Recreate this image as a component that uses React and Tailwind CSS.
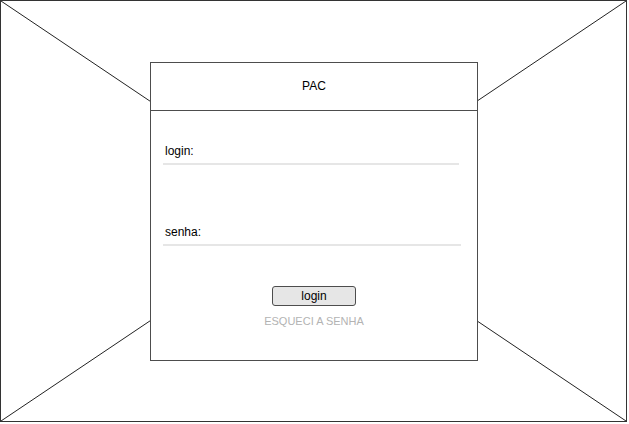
import React from 'react';

const font = { fontFamily: '"Liberation Sans", Arial, sans-serif' };

const Field = ({ label, className = '' }) => (
  <div className={className}>
    <div className="pl-[2px] text-[12px] leading-[14px] text-black">{label}</div>
    <div className="mt-[5px] h-[2px] bg-[#e6e6e6]" />
  </div>
);

export default function App() {
  return (
    <div className="w-[629px] h-[424px] bg-white" style={font}>
      <div className="relative w-[627px] h-[422px] border border-[#333]">
        {/* placeholder X */}
        <svg className="absolute inset-0" width="625" height="420" viewBox="0 0 625 420">
          <line x1="0" y1="0" x2="625" y2="420" stroke="#222" strokeWidth="1" />
          <line x1="625" y1="0" x2="0" y2="420" stroke="#222" strokeWidth="1" />
        </svg>

        <div className="relative ml-[149px] mt-[61px] w-[328px] h-[299px] bg-white border border-[#4d4d4d] flex flex-col">
          <div className="h-[48px] pb-[2px] flex items-center justify-center border-b border-[#4d4d4d] text-[12px] text-black">
            PAC
          </div>
          <div className="flex flex-col px-[12px]">
            <Field label="login:" className="mt-[33px] mr-[6px]" />
            <Field label="senha:" className="mt-[60px] mr-[4px]" />
            <div className="mt-[40px] flex flex-col items-center">
              <button className="w-[84px] h-[20px] bg-[#e6e6e6] border border-[#4d4d4d] rounded-[3px] text-[12px] leading-[16px] text-black">
                login
              </button>
              <div className="mt-[9px] text-[11px] leading-[13px] text-[#b3b3b3]">ESQUECI A SENHA</div>
            </div>
          </div>
        </div>
      </div>
    </div>
  );
}
